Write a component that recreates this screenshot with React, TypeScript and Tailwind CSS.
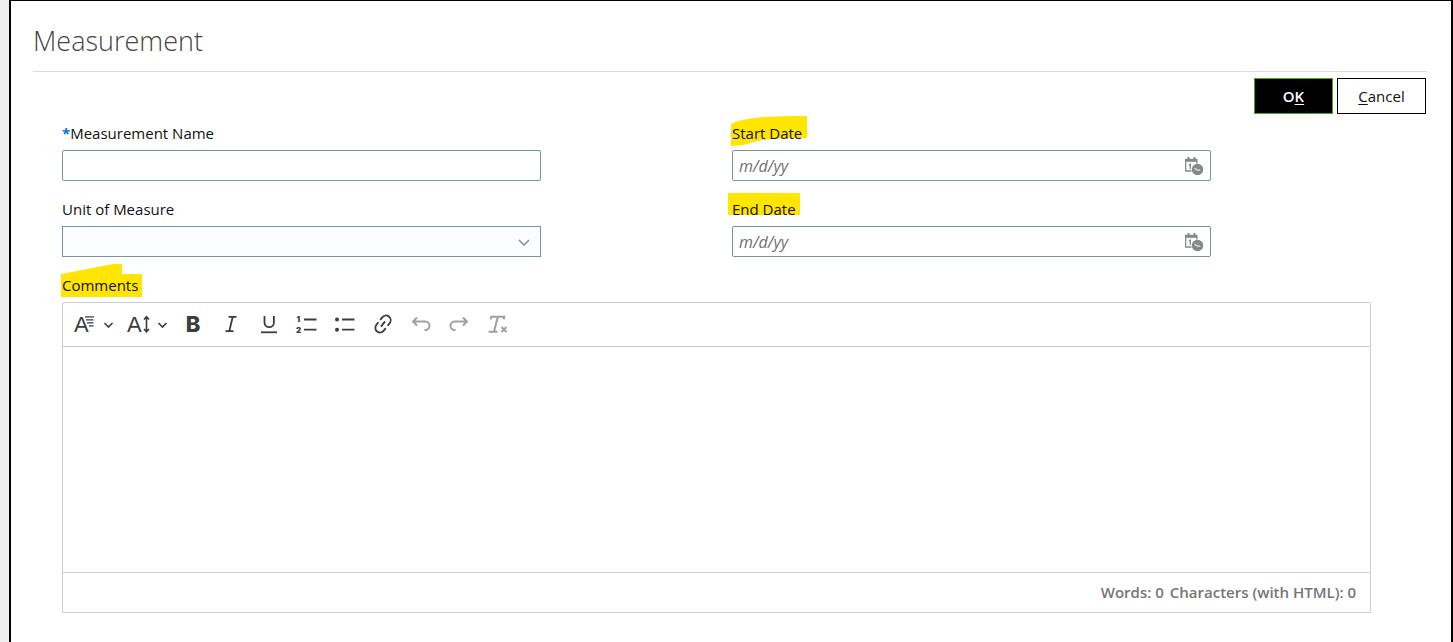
import React, { useState } from 'react';

interface FieldLabelProps {
  htmlFor: string;
  required?: boolean;
  marker?: React.ReactNode;
  children: React.ReactNode;
}

function FieldLabel({ htmlFor, required, marker, children }: FieldLabelProps) {
  return (
    <div className="relative isolate mb-[7px] flex">
      {marker}
      <label htmlFor={htmlFor} className="text-[15px] leading-5 font-medium text-[#111111]">
        {required && <span className="font-bold text-[#0572ce]">*</span>}
        {children}
      </label>
    </div>
  );
}

function CalendarClockIcon() {
  return (
    <svg className="h-5 w-5" viewBox="0 0 20 20" fill="none">
      <path d="M0 4.300h12.500" stroke="#85898c" strokeWidth="3" />
      <path d="M3.500 1v3M9.500 1v3" stroke="#85898c" strokeWidth="2" />
      <path d="M.7 5v10H6.500M11.800 5v2.500" stroke="#85898c" strokeWidth="1.300" />
      <path d="M3.800 9.300l1.500-1v4.700" stroke="#85898c" strokeWidth="1.300" />
      <circle cx="12.500" cy="13.500" r="5.700" fill="#85898c" />
      <path d="M9.500 12.200l2.800 1.900h3" stroke="#e4e6e8" strokeWidth="1.200" />
    </svg>
  );
}

interface DateFieldProps {
  id: string;
  label: string;
  marker: React.ReactNode;
}

function DateField({ id, label, marker }: DateFieldProps) {
  const [value, setValue] = useState('');

  return (
    <div>
      <FieldLabel htmlFor={id} marker={marker}>{label}</FieldLabel>
      <div className="flex h-[31px] w-3/4 items-center rounded-[2px] border border-[#7c919e] bg-white pr-[5px]">
        <input
          id={id}
          type="text"
          placeholder="m/d/yy"
          value={value}
          onChange={(e) => setValue(e.target.value)}
          className="h-full min-w-0 flex-1 px-1.5 text-base font-medium outline-none placeholder:text-[#707070] placeholder:italic"
        />
        <button type="button" aria-label={`Select ${label}`}>
          <CalendarClockIcon />
        </button>
      </div>
    </div>
  );
}

function Chevron() {
  return <path d="M34.500 11l4 4 4-4" stroke="currentColor" strokeWidth="1.600" fill="none" />;
}

interface ToolButtonProps {
  label: string;
  disabled?: boolean;
  children: React.ReactNode;
}

function ToolButton({ label, disabled, children }: ToolButtonProps) {
  return (
    <button
      type="button"
      aria-label={label}
      disabled={disabled}
      className="flex h-full w-[38px] items-center justify-center text-[#3c3c3c] disabled:text-[#a0a0a0]"
    >
      <svg className="h-6 w-6" viewBox="0 0 24 24" fill="none" stroke="currentColor" strokeWidth="1.800">
        {children}
      </svg>
    </button>
  );
}

function Toolbar() {
  return (
    <div className="flex h-11 items-center border-b border-[#cdcdd0] pb-0.5 pl-[3px]">
      <button type="button" aria-label="Paragraph style" className="flex h-full w-[54px] items-center text-[#3c3c3c]">
        <svg className="h-6 w-[54px] shrink-0" viewBox="0 0 54 24" fill="currentColor">
          <text x="8" y="20" fontSize="22" fontFamily="Liberation Sans, sans-serif">A</text>
          <path d="M19 4.800h9M20 7.800h7.500M21 10.800h6.500M23 13.800h4.500" stroke="currentColor" strokeWidth="1.300" />
          <g transform="translate(4 0)"><Chevron /></g>
        </svg>
      </button>
      <button type="button" aria-label="Font size" className="flex h-full w-[54px] items-center text-[#3c3c3c]">
        <svg className="h-6 w-[54px] shrink-0" viewBox="0 0 54 24" fill="currentColor">
          <text x="7" y="20" fontSize="22" fontFamily="Liberation Sans, sans-serif">A</text>
          <path d="M26.500 5v14M24 7.500l2.500-2.700L29 7.500M24 17l2.500 2.700L29 17" fill="none" stroke="currentColor" strokeWidth="1.600" />
          <g transform="translate(4 0)"><Chevron /></g>
        </svg>
      </button>
      <ToolButton label="Bold">
        <text x="12" y="20" textAnchor="middle" fontSize="22" fontWeight="800" fontFamily="Inter, sans-serif" fill="currentColor" stroke="none">B</text>
      </ToolButton>
      <ToolButton label="Italic">
        <path d="M9.500 4.800h8M6.500 19.200h8M13.700 5l-3.400 14" />
      </ToolButton>
      <ToolButton label="Underline">
        <path d="M7.500 4v6.500a4.700 4.700 0 0 0 9.400 0V4" />
        <path d="M4 20.300h16" />
      </ToolButton>
      <ToolButton label="Numbered list">
        <g fill="currentColor" stroke="none" fontSize="8" fontWeight="900" fontFamily="Inter, sans-serif">
          <text x="1.500" y="10.300">1</text>
          <text x="1" y="21">2</text>
        </g>
        <path d="M9 7.500h12.500M9 17.700h12.500" />
      </ToolButton>
      <ToolButton label="Bulleted list">
        <circle cx="4" cy="7.500" r="2" fill="currentColor" stroke="none" />
        <circle cx="4" cy="17.700" r="2" fill="currentColor" stroke="none" />
        <path d="M9 7.500h12.500M9 17.700h12.500" />
      </ToolButton>
      <ToolButton label="Link">
        <g transform="rotate(-52 12 12)">
          <path d="M10.500 7.300H7.200a4.700 4.700 0 0 0 0 9.400h3.300M13.500 7.300h3.300a4.700 4.700 0 0 1 0 9.400h-3.300M8.700 12h6.600" />
        </g>
      </ToolButton>
      <ToolButton label="Undo" disabled>
        <path d="M8 5.500L4 9.500l4 4M4 9.500h12.300a4.200 4.200 0 0 1 0 8.400h-.8" strokeWidth="2" />
      </ToolButton>
      <ToolButton label="Redo" disabled>
        <path d="M16 5.500l4 4-4 4M20 9.500H7.700a4.200 4.200 0 0 0 0 8.400h.8" strokeWidth="2" />
      </ToolButton>
      <ToolButton label="Remove format" disabled>
        <path d="M5.500 7.500l.8-2.700h13l-.6 2.700M12.800 4.800L9 19.800M3.500 19.800h9M16.500 15l5 5M21.500 15l-5 5" strokeWidth="2" />
      </ToolButton>
    </div>
  );
}

export default function App() {
  const [name, setName] = useState('');
  const [unit, setUnit] = useState('');
  const [comments, setComments] = useState('');

  const words = comments.split(/\s+/).filter(Boolean).length;

  return (
    <div className="flex min-h-screen bg-[#efefef] pl-[9px] font-['Open_Sans','Noto_Sans',sans-serif]">
      <main className="flex-1 border-x-2 border-t border-black bg-white pr-6 pl-[22px]">
        <h1 className="border-b border-[#d6dde2] pt-5 pb-[10px] text-[27px] leading-10 font-light text-[#454545]">
          Measurement
        </h1>

        {/* Actions */}
        <div className="mt-1.5 flex justify-end gap-1 pr-px text-[15px] font-medium">
          <button type="button" className="h-9 w-[79px] border border-[#4da60c] bg-black font-semibold text-white">
            O<span className="underline underline-offset-2">K</span>
          </button>
          <button type="button" className="h-9 w-[89px] border border-black bg-white text-[#111111]">
            <span className="underline underline-offset-2">C</span>ancel
          </button>
        </div>

        <form className="mt-[9px] mr-[56px] ml-[29px]">
          <div className="grid grid-cols-2 gap-x-[31px] gap-y-[18px]">
            <div>
              <FieldLabel htmlFor="name" required>Measurement Name</FieldLabel>
              <input
                id="name"
                type="text"
                value={name}
                onChange={(e) => setName(e.target.value)}
                className="block h-[31px] w-3/4 rounded-[2px] border border-[#7c919e] px-1.5 text-[15px] outline-none"
              />
            </div>

            <DateField
              id="start-date"
              label="Start Date"
              marker={
                <svg className="absolute -top-2 -left-0.5 -z-10 h-8 w-20" viewBox="0 0 80 32" fill="#ffe500">
                  <path d="M1 9C16 2 40 1 77 1v22c-28-1-50 2-63 7l-13 1z" />
                </svg>
              }
            />

            <div>
              <FieldLabel htmlFor="unit">Unit of Measure</FieldLabel>
              <div className="relative w-3/4">
                <select
                  id="unit"
                  value={unit}
                  onChange={(e) => setUnit(e.target.value)}
                  className="block h-[31px] w-full appearance-none border border-[#7c919e] bg-[#fbfcfe] px-1.5 text-[15px] outline-none"
                >
                  <option value=""></option>
                </select>
                <svg className="pointer-events-none absolute top-2.5 right-2 h-3 w-4" viewBox="0 0 16 12" fill="none" stroke="#8f9499" strokeWidth="1.700">
                  <path d="M2 4l5 5 5-5" />
                </svg>
              </div>
            </div>

            <DateField
              id="end-date"
              label="End Date"
              marker={
                <svg className="absolute -top-2 -left-1 -z-10 h-6 w-[72px]" viewBox="0 0 72 24" fill="#ffe500">
                  <path d="M0 2h72v22H0z" />
                </svg>
              }
            />
          </div>

          {/* Comments editor */}
          <div className="mt-[18px]">
            <FieldLabel
              htmlFor="comments"
              marker={
                <svg className="absolute -top-3 -left-px -z-10 h-9 w-[81px]" viewBox="0 0 81 36" fill="#ffe500">
                  <path d="M0 11L52 1h9v10h20v23H0z" />
                </svg>
              }
            >
              Comments
            </FieldLabel>
            <div className="rounded-t-[2px] border border-[#cdcdd0]">
              <Toolbar />
              <textarea
                id="comments"
                value={comments}
                onChange={(e) => setComments(e.target.value)}
                className="block h-[225px] w-full resize-none px-3 py-2 text-[15px] outline-none"
              />
              <div className="flex h-10 items-center justify-end gap-1.5 border-t border-[#cdcdd0] pr-3.5 text-[15px] font-semibold text-[#767676]">
                <span>Words: {words}</span>
                <span>Characters (with HTML): {comments.length}</span>
              </div>
            </div>
          </div>
        </form>
      </main>
    </div>
  );
}
